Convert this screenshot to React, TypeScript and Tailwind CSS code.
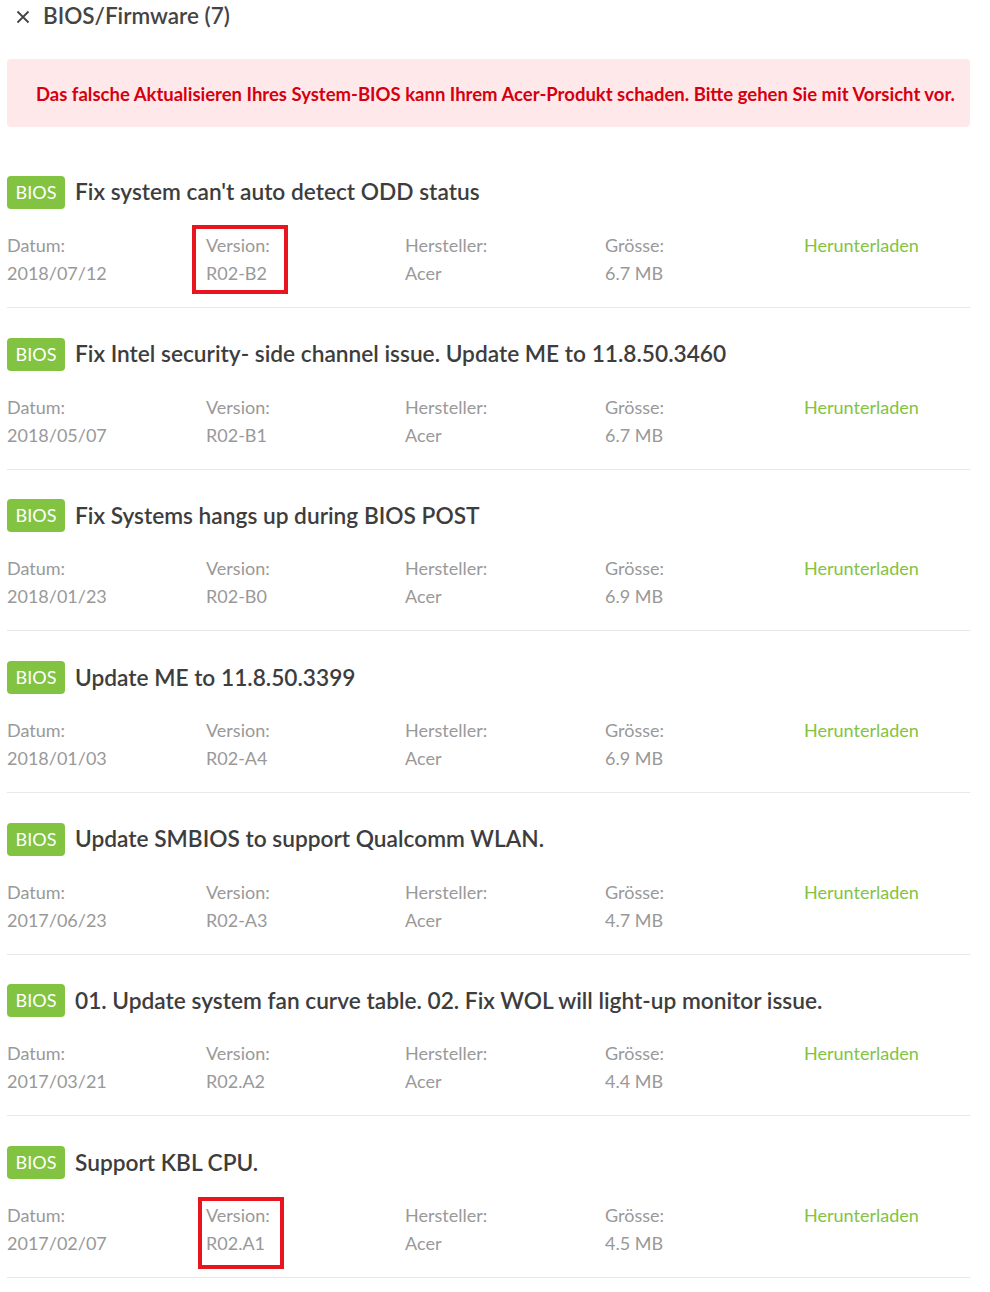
const items = [
    { title: "Fix system can't auto detect ODD status", date: '2018/07/12', version: 'R02-B2', size: '6.7 MB', mark: 'a' },
    { title: 'Fix Intel security- side channel issue. Update ME to 11.8.50.3460', date: '2018/05/07', version: 'R02-B1', size: '6.7 MB' },
    { title: 'Fix Systems hangs up during BIOS POST', date: '2018/01/23', version: 'R02-B0', size: '6.9 MB' },
    { title: 'Update ME to 11.8.50.3399', date: '2018/01/03', version: 'R02-A4', size: '6.9 MB' },
    { title: 'Update SMBIOS to support Qualcomm WLAN.', date: '2017/06/23', version: 'R02-A3', size: '4.7 MB' },
    { title: '01. Update system fan curve table. 02. Fix WOL will light-up monitor issue.', date: '2017/03/21', version: 'R02.A2', size: '4.4 MB' },
    { title: 'Support KBL CPU.', date: '2017/02/07', version: 'R02.A1', size: '4.5 MB', mark: 'b' },
]

export default function App() {
    return (
        <div className="min-h-[1292px] bg-white pl-[7px] pr-5 text-[#444]" style={{ fontFamily: 'Lato, "Open Sans", sans-serif' }}>
            {/* Header */}
            <div className="flex h-8 items-center gap-3 pl-2">
                <svg width="16" height="16" viewBox="0 0 16 16" className="mt-0.5">
                    <path d="M2.5 2.5 L13.5 13.5 M13.5 2.5 L2.5 13.5" stroke="#444" strokeWidth="1.8" />
                </svg>
                <h1 className="text-[22.5px] font-semibold text-[#444]">BIOS/Firmware (7)</h1>
            </div>

            {/* Warnung */}
            <div className="mt-[27px] flex h-[68px] items-center rounded bg-[#ffe8ea] pl-[29px] pt-1">
                <p className="text-[18.5px] font-bold text-[#d5000f]">
                    Das falsche Aktualisieren Ihres System-BIOS kann Ihrem Acer-Produkt schaden. Bitte gehen Sie mit Vorsicht vor.
                </p>
            </div>

            {/* Liste */}
            <div className="mt-[49px]">
                {items.map((item) => (
                    <div key={item.version} className="mb-[29.7px] border-b border-[#e8e8e8] pb-[20px]">
                        <div className="flex h-[33px] items-center gap-[10px]">
                            <span className="flex h-[33px] w-[58px] items-center justify-center rounded bg-[#82c341] text-[18px] text-white">
                                BIOS
                            </span>
                            <h2 className="text-[22.7px] font-semibold text-[#3d3d3d]">{item.title}</h2>
                        </div>
                        <div className="mt-[22px] grid grid-cols-[199px_199px_200px_199px_1fr] text-[18px] leading-[28px] text-[#999]">
                            <div>
                                <div>Datum:</div>
                                <div>{item.date}</div>
                            </div>
                            <div className="relative">
                                <div>Version:</div>
                                <div>{item.version}</div>
                                {item.mark === 'a' && (
                                    <div className="absolute left-[-14px] top-[-6px] h-[69px] w-[96px] border-4 border-[#e8141e]" />
                                )}
                                {item.mark === 'b' && (
                                    <div className="absolute left-[-8px] top-[-4px] h-[72px] w-[86px] border-4 border-[#e8141e]" />
                                )}
                            </div>
                            <div>
                                <div>Hersteller:</div>
                                <div>Acer</div>
                            </div>
                            <div>
                                <div>Grösse:</div>
                                <div>{item.size}</div>
                            </div>
                            <div>
                                <a href="#" className="text-[#82c341]">Herunterladen</a>
                            </div>
                        </div>
                    </div>
                ))}
            </div>
        </div>
    )
}
